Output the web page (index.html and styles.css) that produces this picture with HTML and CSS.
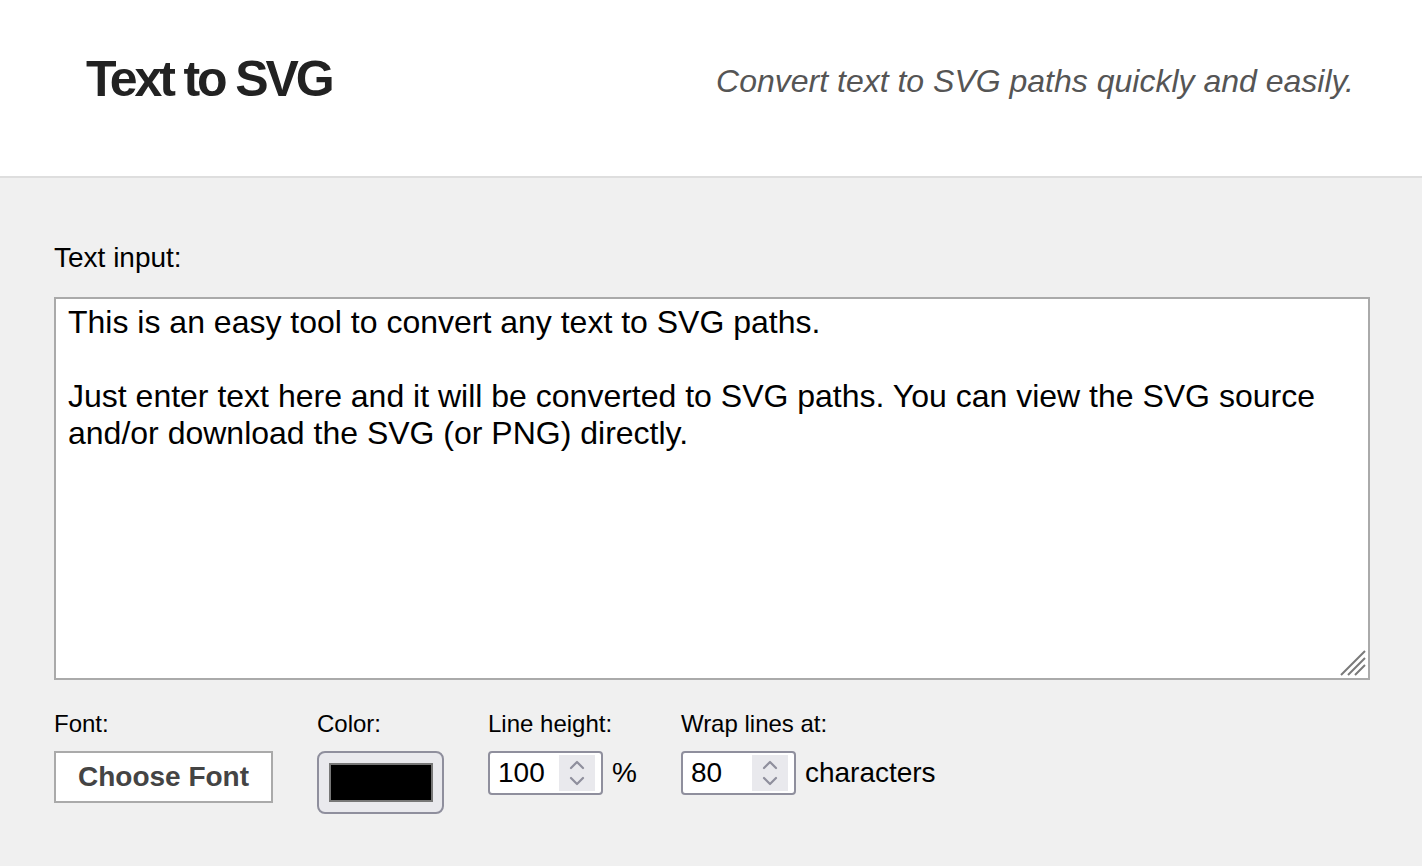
FILE: index.html
```html
<!DOCTYPE html>
<html lang="en">
<head>
<meta charset="UTF-8">
<meta name="viewport" content="width=device-width, initial-scale=1.0">
<title>Text to SVG</title>
<link rel="stylesheet" href="styles.css">
</head>
<body>
<header class="top-bar">
    <h1 class="logo">Text to SVG</h1>
    <p class="tagline">Convert text to SVG paths quickly and easily.</p>
</header>

<main class="editor">
    <label class="field-label input-label" for="text-input">Text input:</label>
    <div class="text-wrap">
        <textarea id="text-input" class="text-input" spellcheck="false">This is an easy tool to convert any text to SVG paths.

Just enter text here and it will be converted to SVG paths. You can view the SVG source and/or download the SVG (or PNG) directly.</textarea>
        <!-- resize grip -->
        <svg class="grip" width="26" height="26" viewBox="0 0 26 26"><path d="M1 25 L25 1 M8 25 L25 8 M15 25 L25 15" stroke="#7a7a7a" stroke-width="2"/></svg>
    </div>

    <div class="options">
        <div class="field">
            <span class="field-label">Font:</span>
            <button class="font-btn">Choose Font</button>
        </div>
        <div class="field">
            <span class="field-label">Color:</span>
            <button class="color-btn"><span class="swatch"></span></button>
        </div>
        <div class="field">
            <span class="field-label">Line height:</span>
            <div class="num-row">
                <div class="num-input">
                    <span class="num-value">100</span>
                    <span class="spinner">
                        <svg width="16" height="28" viewBox="0 0 16 28"><path d="M2 9 L8 3 L14 9 M2 19 L8 25 L14 19" fill="none" stroke="#8f8f9d" stroke-width="2.2" stroke-linecap="round" stroke-linejoin="round"/></svg>
                    </span>
                </div>
                <span class="unit">%</span>
            </div>
        </div>
        <div class="field">
            <span class="field-label">Wrap lines at:</span>
            <div class="num-row">
                <div class="num-input">
                    <span class="num-value">80</span>
                    <span class="spinner">
                        <svg width="16" height="28" viewBox="0 0 16 28"><path d="M2 9 L8 3 L14 9 M2 19 L8 25 L14 19" fill="none" stroke="#8f8f9d" stroke-width="2.2" stroke-linecap="round" stroke-linejoin="round"/></svg>
                    </span>
                </div>
                <span class="unit">characters</span>
            </div>
        </div>
    </div>
</main>
</body>
</html>
```

FILE: styles.css
```css
body {
    margin: 0;
    min-height: 100vh;
    font-family: "Liberation Sans", Arial, sans-serif;
    background: #f0f0f0;
    color: #000;
}

.top-bar {
    height: 178px;
    box-sizing: border-box;
    padding: 0 68px 18px 86px;
    display: flex;
    align-items: center;
    justify-content: space-between;
    background: #fff;
    border-bottom: 2px solid #dedede;
}

.logo {
    margin: 0;
    font-size: 50px;
    font-weight: bold;
    letter-spacing: -3.1px;
    color: #222;
}

.tagline {
    margin: 4px 0 0;
    font-size: 32px;
    font-style: italic;
    color: #555;
}

.editor {
    padding: 64px 52px 0 54px;
}

.field-label {
    display: block;
    font-size: 24px;
}

.input-label {
    font-size: 28px;
    margin-bottom: 23px;
}

.text-wrap {
    position: relative;
}

.text-input {
    display: block;
    width: 100%;
    height: 383px;
    box-sizing: border-box;
    margin: 0;
    padding: 5px 12px 4px;
    border: 2px solid #aaa;
    background: #fff;
    font-family: "Liberation Sans", Arial, sans-serif;
    font-size: 32px;
    line-height: normal;
    color: #000;
    outline: none;
    resize: none;
}

.grip {
    position: absolute;
    right: 4px;
    bottom: 4px;
    pointer-events: none;
}

.options {
    display: flex;
    gap: 44px;
    margin-top: 30px;
}

.field {
    display: flex;
    flex-direction: column;
    align-items: flex-start;
    gap: 13px;
}

.font-btn {
    width: 219px;
    height: 52px;
    box-sizing: border-box;
    padding: 0;
    border: 2px solid #aaa;
    background: #fff;
    font-family: inherit;
    font-size: 28px;
    font-weight: bold;
    color: #444;
    cursor: pointer;
}

.color-btn {
    width: 127px;
    height: 63px;
    box-sizing: border-box;
    padding: 0;
    display: flex;
    align-items: center;
    justify-content: center;
    background: #e9e9ed;
    border: 2px solid #8f8f9d;
    border-radius: 8px;
    cursor: pointer;
}

.swatch {
    width: 104px;
    height: 39px;
    box-sizing: border-box;
    background: #000;
    border: 2px solid #777;
}

.num-row {
    display: flex;
    align-items: center;
    gap: 9px;
}

.num-input {
    width: 115px;
    height: 44px;
    box-sizing: border-box;
    display: flex;
    align-items: center;
    justify-content: space-between;
    padding: 0 6px 0 8px;
    background: #fff;
    border: 2px solid #8f8f9d;
    border-radius: 4px;
}

.num-value {
    font-size: 28px;
}

.spinner {
    width: 36px;
    height: 36px;
    display: flex;
    align-items: center;
    justify-content: center;
    background: #e9e9ed;
}

.unit {
    font-size: 28px;
}
```
